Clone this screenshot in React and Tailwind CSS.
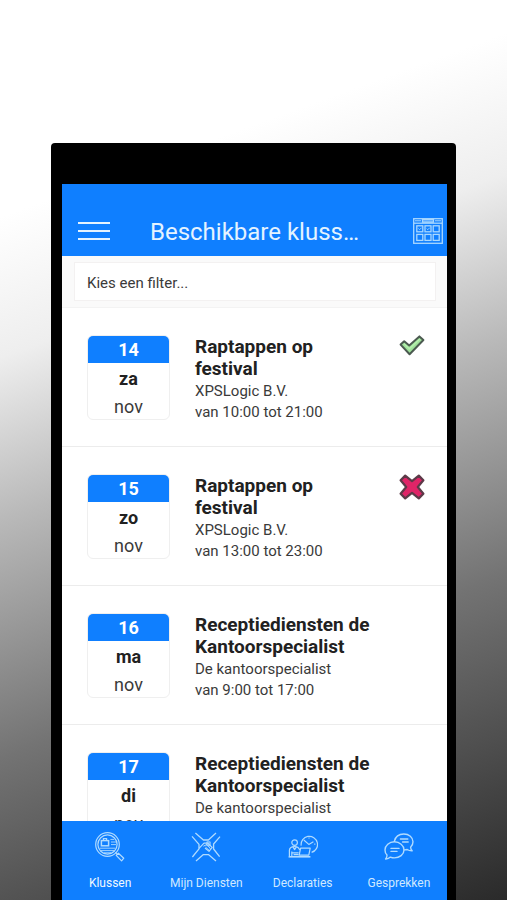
import React, { useState } from "react";

const jobs = [
    { day: "14", weekday: "za", month: "nov", title: "Raptappen op festival", company: "XPSLogic B.V.", time: "van 10:00 tot 21:00", status: "accepted" },
    { day: "15", weekday: "zo", month: "nov", title: "Raptappen op festival", company: "XPSLogic B.V.", time: "van 13:00 tot 23:00", status: "declined" },
    { day: "16", weekday: "ma", month: "nov", title: "Receptiediensten de Kantoorspecialist", company: "De kantoorspecialist", time: "van 9:00 tot 17:00" },
    { day: "17", weekday: "di", month: "nov", title: "Receptiediensten de Kantoorspecialist", company: "De kantoorspecialist", time: "van 9:00 tot 17:00" },
];

const CalendarIcon = () => (
    <svg className="w-[30px] h-[26px]" viewBox="0 0 30 26" fill="none" stroke="currentColor" strokeWidth="1.3">
        <rect x="0.7" y="0.7" width="28.6" height="24.6" />
        <path d="M1 5.2h28" />
        <path d="M2 2.8h6M22 2.8h6" strokeWidth="1" />
        <rect x="9.5" y="1.4" width="11" height="2.8" fill="currentColor" fillOpacity="0.5" />
        <rect x="3.8" y="7.8" width="6" height="6" />
        <rect x="12" y="7.8" width="6" height="6" />
        <rect x="20.2" y="7.8" width="6" height="6" />
        <rect x="3.8" y="16.4" width="6" height="6" />
        <rect x="12" y="16.4" width="6" height="6" />
        <rect x="20.2" y="16.4" width="6" height="6" />
        <path d="M5.4 10.5l1.2 1.2 2-2M13.6 10.5l1.2 1.2 2-2" strokeWidth="0.9" />
    </svg>
);

const CheckIcon = () => (
    <svg className="w-[26px] h-[21px]" viewBox="0 0 26 21" role="img" aria-label="Geaccepteerd">
        <path
            d="M1.6 9.6L5.2 6.2L10.2 10.4L20.4 1.4L24.4 5L10.6 19.2Z"
            fill="#a0e29b"
            stroke="#4b5a50"
            strokeWidth="2"
            strokeLinejoin="round"
        />
        <path d="M5 8.8l5.4 5L20.6 4.2" fill="none" stroke="#b6f0ae" strokeWidth="1.4" />
    </svg>
);

const CrossIcon = () => (
    <svg className="w-[26px] h-[26px]" viewBox="0 0 26 26" role="img" aria-label="Afgewezen">
        <path
            d="M6.2 1.6L13 7.2L19.8 1.6L24.4 6.2L18.8 13L24.4 19.8L19.8 24.4L13 18.8L6.2 24.4L1.6 19.8L7.2 13L1.6 6.2Z"
            fill="#df2467"
            stroke="#5c3a48"
            strokeWidth="2.2"
            strokeLinejoin="round"
        />
    </svg>
);

const JobsIcon = () => (
    <svg className="w-[30px] h-[30px]" viewBox="0 0 30 30" fill="none" stroke="currentColor" strokeWidth="1.2">
        <circle cx="12.5" cy="12.5" r="11.8" />
        <circle cx="12.5" cy="12.5" r="9.6" />
        <rect x="6.4" y="8.6" width="7.2" height="5.2" strokeWidth="1.5" />
        <path d="M8.4 8.4V6.6h3.2v1.8" />
        <path d="M15.4 7.4h3.6M16 10h5M16 12.6h5M4.6 16.2h16M6 18.6h13M9 20.8h7" strokeWidth="0.9" />
        <path d="M20.4 20.4l2 2" />
        <path d="M21.2 23.4l2.2-2.2 5.4 5-2.2 2.6z" strokeLinejoin="round" />
    </svg>
);

const ServicesIcon = () => (
    <svg className="w-[30px] h-[30px]" viewBox="0 0 30 30" fill="none" stroke="currentColor" strokeWidth="1.3" strokeLinejoin="round">
        {/* Sleeves */}
        <path d="M1 4.4L8 12.4v4.4L1.4 25" />
        <path d="M4.4 1l8 7h5L25 1" />
        <path d="M29 4.6L22.6 12v5l6 7.6" />
        <path d="M5 29l7.4-6.4h5L25 29" />
        {/* Hands */}
        <path d="M8 16.4l5-5.2h3.8l4.4 4.2-3.2 4-4-3.4" strokeWidth="1.2" />
        <path d="M12.4 14.2l3.6-1.8 3.4 4.4M14.6 15.2l3.4 3" strokeWidth="1" />
        <path d="M15.8 9.8h3.4v4h-3.4z" fill="currentColor" fillOpacity="0.5" strokeWidth="0.8" />
    </svg>
);

const ClaimsIcon = () => (
    <svg className="w-[30px] h-[24px]" viewBox="0 0 30 24" fill="none" stroke="currentColor" strokeWidth="1.2" strokeLinejoin="round">
        <path d="M13.2 10.6A8.2 8.2 0 1 1 23.6 17.4" />
        <path d="M15.8 5l5 4.4 4.6-2.6" />
        <path d="M21 2.4v1.2M27.4 9.2h-1.2" />
        <circle cx="6.6" cy="7.6" r="2.8" />
        <path d="M1.4 21v-5.4c0-2.6 2-4 5.2-4s4.6 1.2 5 3.4" />
        <path d="M3.8 21v-4.4M5 12l1.6 2.6L8.4 12M4.2 17.8h6.4M5.6 19.6h5" />
        <path d="M12.6 13.2h9.6l-1.4 7h-9.6z" />
        <path d="M.6 21.8h21.8" strokeWidth="1.6" />
    </svg>
);

const ChatIcon = () => (
    <svg className="w-[30px] h-[28px]" viewBox="0 0 30 28" fill="none" stroke="currentColor" strokeWidth="1.4" strokeLinejoin="round" strokeLinecap="round">
        <path d="M10.4 8.2C11.4 3.8 15 1 19.8 1c5.2 0 9.2 3.5 9.2 7.8 0 2.3-.9 4-2.4 5.4.1 1.6.7 2.8 1.6 3.6-1.8.1-3.6-.3-5-1.3-.9.3-1.8.4-2.8.4" />
        <path d="M10.4 8.8c5.2 0 9.6 3.6 9.6 8.1s-4.4 8-9.6 8c-1.6 0-2.8-.3-4-.8-1.3 1.3-3 2-4.8 1.9 1-1.1 1.5-2.4 1.4-3.9C1.6 20.8 1 19 1 16.9c0-4.5 4.2-8.1 9.4-8.1z" />
        <path d="M7 15.4h8M7 18.4h6M16.4 6h7.4M18.6 9h5.6" />
    </svg>
);

const tabs = [
    { label: "Klussen", Icon: JobsIcon },
    { label: "Mijn Diensten", Icon: ServicesIcon },
    { label: "Declaraties", Icon: ClaimsIcon },
    { label: "Gesprekken", Icon: ChatIcon },
];

const JobRow = ({ day, weekday, month, title, company, time, status }) => (
    <li className="flex items-start border-b border-[#ececec] pl-[25px] pr-[22px] pt-[27px] pb-[23px]">
        {/* Date */}
        <div className="w-[83px] shrink-0 rounded-md overflow-hidden border border-[#efefef] text-lg text-center text-[#3a3a3a]">
            <div className="bg-[#0f7fff] text-white font-bold leading-[27px]">{day}</div>
            <div className="font-bold text-[#212121] leading-8">{weekday}</div>
            <div className="leading-6">{month}</div>
        </div>

        {/* Info */}
        <div className="flex-1 ml-[25px] pt-px text-[15px] leading-[21px] text-[#3a3a3a]">
            <h2 className="max-w-[180px] mb-px text-[19px] leading-[22px] font-bold text-[#212121]">{title}</h2>
            <p>{company}</p>
            <p>{time}</p>
        </div>

        {/* Status */}
        {status === "accepted" && <CheckIcon />}
        {status === "declined" && <CrossIcon />}
    </li>
);

export default function App() {
    const [active, setActive] = useState("Klussen");

    return (
        <div className="h-screen overflow-hidden flex flex-col px-[51px] pt-[143px] bg-[linear-gradient(160deg,#ffffff_20%,#eeeeee_33%,#b9b9b9_48%,#737373_70%,#2a2a2a_100%)] font-['Roboto','Liberation_Sans',sans-serif]">
            <div className="flex-1 min-h-0 flex flex-col rounded-t bg-black pt-[41px] pl-[11px] pr-[9px]">
                <header className="h-[72px] shrink-0 grid grid-cols-[48px_1fr_48px] items-end bg-[#0f7fff] text-[#e4f3ff] pb-3">
                    <button aria-label="Menu" className="w-8 h-[26px] ml-4 flex flex-col justify-center gap-1.5">
                        <span className="w-full h-0.5 bg-current"></span>
                        <span className="w-full h-0.5 bg-current"></span>
                        <span className="w-full h-0.5 bg-current"></span>
                    </button>
                    <h1 className="text-2xl leading-6 text-center">Beschikbare kluss…</h1>
                    <button aria-label="Kalender" className="mr-1 justify-self-end text-[#a9d8ff]">
                        <CalendarIcon />
                    </button>
                </header>

                <main className="flex-1 min-h-0 flex flex-col bg-white">
                    <div className="shrink-0 bg-[#fafafa] border-b border-[#f3f3f3] pl-3 pr-[11px] py-1.5">
                        <select aria-label="Filter" className="w-full h-[39px] appearance-none bg-white border border-[#f3f1f1] px-3 pt-1 text-[15px] text-[#3a3a3a]">
                            <option>Kies een filter...</option>
                        </select>
                    </div>

                    <ul className="flex-1 min-h-0 overflow-y-auto [scrollbar-width:none]">
                        {jobs.map((job) => (
                            <JobRow key={job.day} {...job} />
                        ))}
                    </ul>
                </main>

                <nav className="h-[79px] shrink-0 grid grid-cols-4 bg-[#0f7fff]">
                    {tabs.map(({ label, Icon }) => (
                        <button
                            key={label}
                            onClick={() => setActive(label)}
                            aria-current={active === label ? "page" : undefined}
                            className="flex flex-col items-center justify-end pb-2 text-[#b0dbff]"
                        >
                            <span className="h-[30px] flex items-center mb-3">
                                <Icon />
                            </span>
                            <span className={`text-xs leading-[18px] whitespace-nowrap ${active === label ? "text-[#f0f8ff]" : "text-[#d0e9ff]"}`}>
                                {label}
                            </span>
                        </button>
                    ))}
                </nav>
            </div>
        </div>
    );
}
